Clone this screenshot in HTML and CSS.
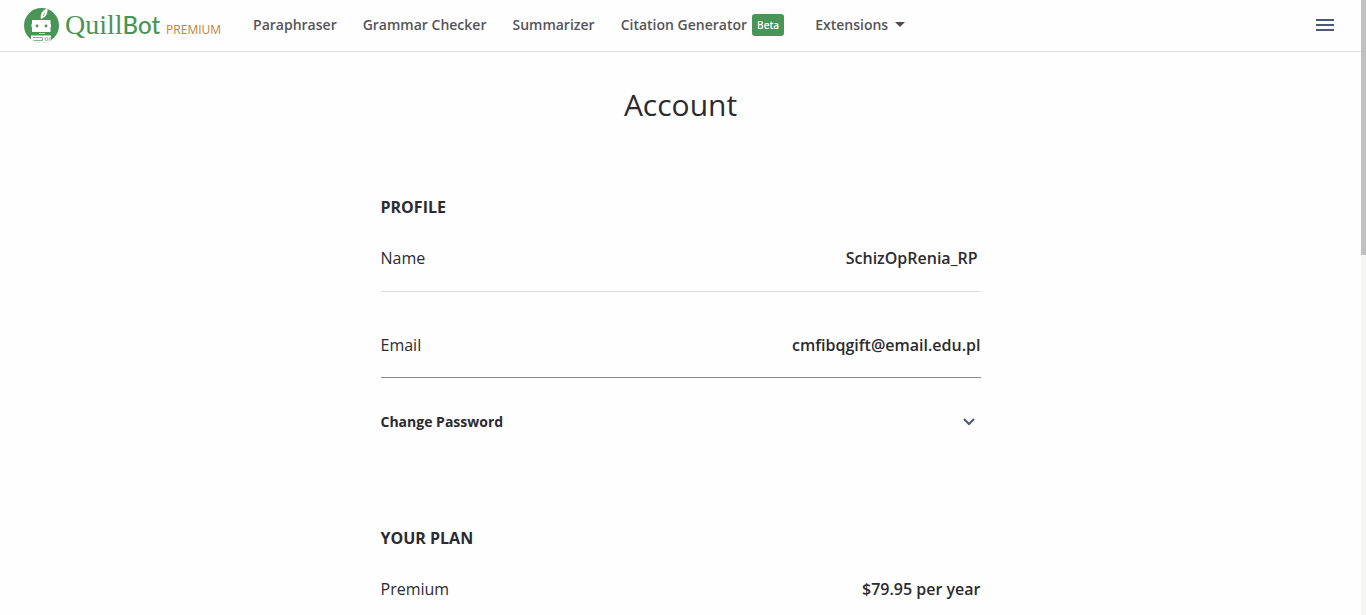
FILE: index.html
```html
<!DOCTYPE html>
<html lang="en">
<head>
  <meta charset="UTF-8">
  <meta name="viewport" content="width=device-width, initial-scale=1.0">
  <title>Account - QuillBot</title>
  <link rel="stylesheet" href="styles.css">
</head>
<body>

  <header class="header">
    <a class="logo" href="#">
      <svg class="logo-icon" viewBox="0 0 36 36" aria-hidden="true">
        <defs>
          <clipPath id="disc"><circle cx="18.500" cy="18.500" r="17.500"/></clipPath>
        </defs>
        <g clip-path="url(#disc)">
          <rect width="36" height="36" fill="#499557"/>
          <path d="M18 12C17 7 19 3 24.500 1.500C25 6 23 10 19.500 11L19 12Z" fill="#fff"/>
          <path d="M20 9L22 6" stroke="#80b589" fill="none"/>
          <rect x="9" y="13" width="18.500" height="12" fill="#fff"/>
          <path d="M8.500 17h1v3h-1zM27 17h1v3h-1z" fill="#fff"/>
          <circle cx="14" cy="19" r="1.400" fill="#499557"/>
          <circle cx="23" cy="19" r="1.400" fill="#499557"/>
          <path d="M16 26.500h6" stroke="#b9d8be"/>
          <path d="M8 28.500h20v7.500H8z" fill="#fff"/>
          <path d="M10 30.500h9M11 33.500h8.500v-3M27 30v5" stroke="#80b589" fill="none"/>
          <circle cx="23.500" cy="32" r="1.500" stroke="#80b589" fill="none"/>
        </g>
      </svg>
      <span class="logo-name">Quill<b>Bot</b></span>
      <span class="logo-plan">PREMIUM</span>
    </a>
    <nav class="nav">
      <a href="#">Paraphraser</a>
      <a href="#">Grammar Checker</a>
      <a href="#">Summarizer</a>
      <a class="with-badge" href="#">Citation Generator <span class="badge">Beta</span></a>
      <button class="nav-menu" type="button">Extensions
        <svg width="10" height="5" viewBox="0 0 10 5" aria-hidden="true"><path d="M0 0h10L5 5z" fill="#504a4e"/></svg>
      </button>
    </nav>
    <button class="menu-button" type="button" aria-label="Menu">
      <svg width="18" height="12" viewBox="0 0 18 12" aria-hidden="true"><path d="M0 0h18v2H0zM0 5h18v2H0zM0 10h18v2H0z" fill="#4b5876"/></svg>
    </button>
  </header>

  <main class="account">
    <h1>Account</h1>

    <section>
      <h2>PROFILE</h2>
      <div class="row">
        <label for="name">Name</label>
        <input class="name-input" type="text" id="name" value="SchizOpRenia_RP">
      </div>
      <div class="row row-email">
        <label for="email">Email</label>
        <input type="email" id="email" value="cmfibqgift@email.edu.pl" readonly>
      </div>
      <button class="password" type="button">Change Password
        <svg width="12" height="8" viewBox="0 0 12 8" aria-hidden="true"><path d="M1 1l5 5 5-5" fill="none" stroke="#4b5876" stroke-width="2"/></svg>
      </button>
    </section>

    <section>
      <h2>YOUR PLAN</h2>
      <div class="row row-plan">
        <span>Premium</span>
        <span class="price">$79.95 per year</span>
      </div>
    </section>
  </main>

  <div class="scrollbar"><div class="scrollbar-thumb"></div></div>

</body>
</html>
```
FILE: styles.css
```css
* { box-sizing: border-box; }
html { scrollbar-width: none; }
body {
  margin: 0;
  padding-right: 5px;
  font-family: "Open Sans", sans-serif;
  font-size: 16px;
  line-height: 24px;
  color: #2b2b30;
  background: #fefefe;
}
a { color: inherit; text-decoration: none; }
button {
  padding: 0;
  border: none;
  background: none;
  font: inherit;
  color: inherit;
  cursor: pointer;
}

/* header */
.header {
  display: flex;
  align-items: center;
  height: 52px;
  padding: 0 27px 2px 23px;
  border-bottom: 1px solid #dedede;
}
.logo { display: flex; align-items: center; }
.logo-icon { width: 36px; height: 36px; }
.logo-name {
  margin-left: 6px;
  font-family: "Liberation Serif", serif;
  font-size: 28px;
  color: #499557;
}
.logo-name b {
  font-family: Lato, sans-serif;
  font-size: 24px;
  font-weight: 500;
}
.logo-plan {
  margin-left: 6px;
  padding-top: 10px;
  font-size: 12px;
  font-weight: 500;
  color: #cd8033;
}
.nav {
  display: flex;
  align-items: center;
  gap: 26px;
  margin-left: 32px;
  font-size: 14px;
  font-weight: 600;
  color: #55545a;
}
.with-badge { display: flex; align-items: center; gap: 5px; }
.badge {
  padding: 0 5px;
  border-radius: 3px;
  background: #499557;
  color: #fff;
  font-size: 10px;
  line-height: 22px;
}
.nav-menu { display: flex; align-items: center; gap: 7px; margin-left: 5px; }
.menu-button { display: flex; margin-left: auto; }

/* account */
.account { max-width: 600px; margin: 0 auto; }
h1 {
  margin: 31px 0 68px;
  font-size: 30px;
  font-weight: 400;
  line-height: 44px;
  text-align: center;
}
h2 {
  margin: 0;
  font-size: 16px;
  font-weight: 700;
  line-height: 24px;
}
.row {
  display: flex;
  align-items: center;
  justify-content: space-between;
  margin-top: 14px;
  height: 59px;
  padding-bottom: 8px;
  border-bottom: 1px solid #dcdcdc;
}
.row input {
  flex: 1;
  min-width: 0;
  padding: 0;
  border: none;
  outline: none;
  background: none;
  font: inherit;
  font-weight: 600;
  color: inherit;
  text-align: right;
}
.row .name-input { padding-right: 3px; }
.row-email { margin-top: 27px; padding-bottom: 6px; border-color: #87878a; }
.row-plan { border-color: transparent; }
.row .price { font-weight: 600; }
.password {
  display: flex;
  align-items: center;
  justify-content: space-between;
  width: 100%;
  margin: 32px 0 92px;
  padding-right: 6px;
  font-size: 14px;
  font-weight: 700;
}

/* page scrollbar */
.scrollbar {
  position: fixed;
  top: 0;
  right: 0;
  bottom: 0;
  width: 5px;
  background: #f6f6f2;
}
.scrollbar-thumb { height: 41.5%; background: #c0c0c0; }
```
